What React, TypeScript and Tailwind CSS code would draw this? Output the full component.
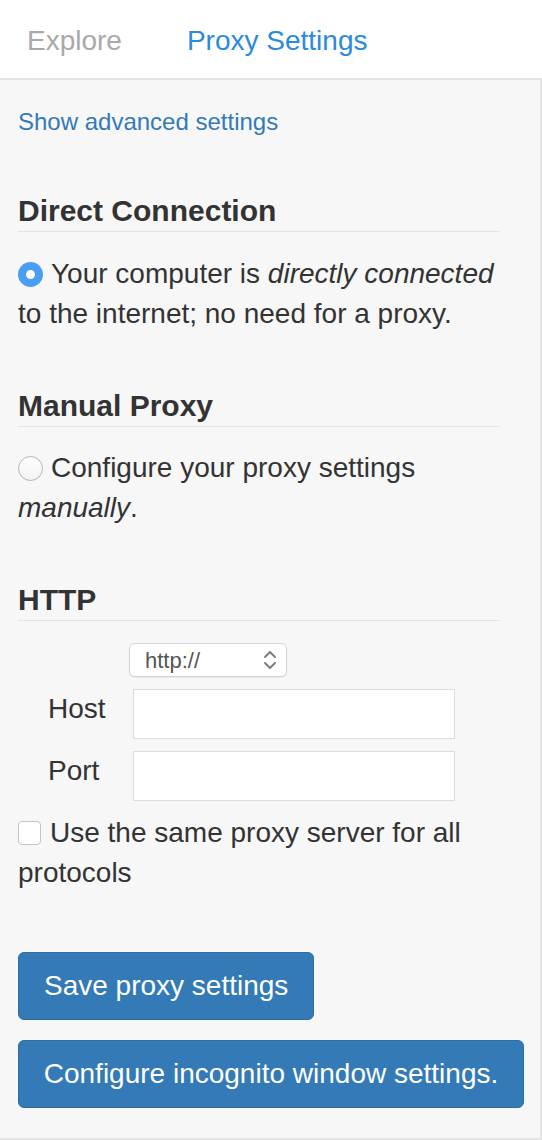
import React from 'react';

function Section({ title }: { title: string }) {
  return (
    <h4 className="mr-[22px] border-b border-[#e5e5e5] pb-[4px] text-[30px] font-bold leading-[33px] text-[#333]">
      {title}
    </h4>
  );
}

function Radio({ checked }: { checked?: boolean }) {
  return checked ? (
    <span className="mr-[8px] inline-block h-[25px] w-[25px] rounded-full border-[8px] border-[#4a9ff5] bg-white align-[-4px]" />
  ) : (
    <span className="mr-[8px] inline-block h-[25px] w-[25px] rounded-full border border-[#b4b4b4] bg-gradient-to-b from-white to-[#f2f2f2] align-[-4px]" />
  );
}

export default function App() {
  return (
    <div className="w-[542px] min-h-[1140px] bg-white font-['Liberation_Sans',Arial,sans-serif]">
      {/* tabs */}
      <nav className="flex h-[78px] items-center gap-[65px] pl-[27px] pt-[3px] text-[28px]">
        <span className="text-[#a9a9a9]">Explore</span>
        <span className="text-[#2a8ae0]">Proxy Settings</span>
      </nav>

      {/* settings panel */}
      <div className="h-[1062px] border-y-2 border-r-2 border-[#e5e5e5] bg-[#f7f7f7] px-[18px]">
        <a className="mt-[25px] block text-[24px] leading-[34px] text-[#337ab7]">Show advanced settings</a>

        <div className="mt-[55px]">
          <Section title="Direct Connection" />
        </div>
        <p className="mt-[22px] text-[28px] leading-[40px] text-[#333]">
          <Radio checked />
          Your computer is <em>directly connected</em> to the internet; no need for a proxy.
        </p>

        <div className="mt-[55px]">
          <Section title="Manual Proxy" />
        </div>
        <p className="mt-[21px] text-[28px] leading-[40px] text-[#333]">
          <Radio />
          Configure your proxy settings <em>manually</em>.
        </p>

        <div className="mt-[55px]">
          <Section title="HTTP" />
        </div>

        <div className="ml-[111px] mt-[22px] flex h-[34px] w-[158px] items-center justify-between rounded-[6px] border border-[#d3d3d3] bg-white pl-[15px] pr-[9px] shadow-[0_1px_1px_rgba(0,0,0,0.06)]">
          <span className="text-[22px] text-[#555]">http://</span>
          <svg width="14" height="22" viewBox="0 0 14 22" fill="none" stroke="#777" strokeWidth="1.8" strokeLinecap="round" strokeLinejoin="round">
            <path d="M2 8 L7 3 L12 8" />
            <path d="M2 14 L7 19 L12 14" />
          </svg>
        </div>

        <div className="mt-[12px] flex items-center">
          <label className="w-[115px] pb-[10px] pl-[30px] text-[28px] leading-[40px] text-[#333]">Host</label>
          <div className="h-[50px] w-[322px] border border-[#dcdcdc] bg-white" />
        </div>
        <div className="mt-[12px] flex items-center">
          <label className="w-[115px] pb-[10px] pl-[30px] text-[28px] leading-[40px] text-[#333]">Port</label>
          <div className="h-[50px] w-[322px] border border-[#dcdcdc] bg-white" />
        </div>

        <p className="mt-[12px] text-[28px] leading-[40px] text-[#333]">
          <span className="mr-[9px] inline-block h-[24px] w-[23px] rounded-[4px] border border-[#c4c4c4] bg-white align-[-3px]" />
          Use the same proxy server for all protocols
        </p>

        <button className="mt-[59px] block h-[68px] rounded-[6px] border border-[#2e6da4] bg-[#337ab7] px-[25px] text-[28px] text-white">
          Save proxy settings
        </button>
        <button className="mt-[20px] block h-[68px] w-[506px] rounded-[6px] border border-[#2e6da4] bg-[#337ab7] text-[28px] text-white">
          Configure incognito window settings.
        </button>
      </div>
    </div>
  );
}
